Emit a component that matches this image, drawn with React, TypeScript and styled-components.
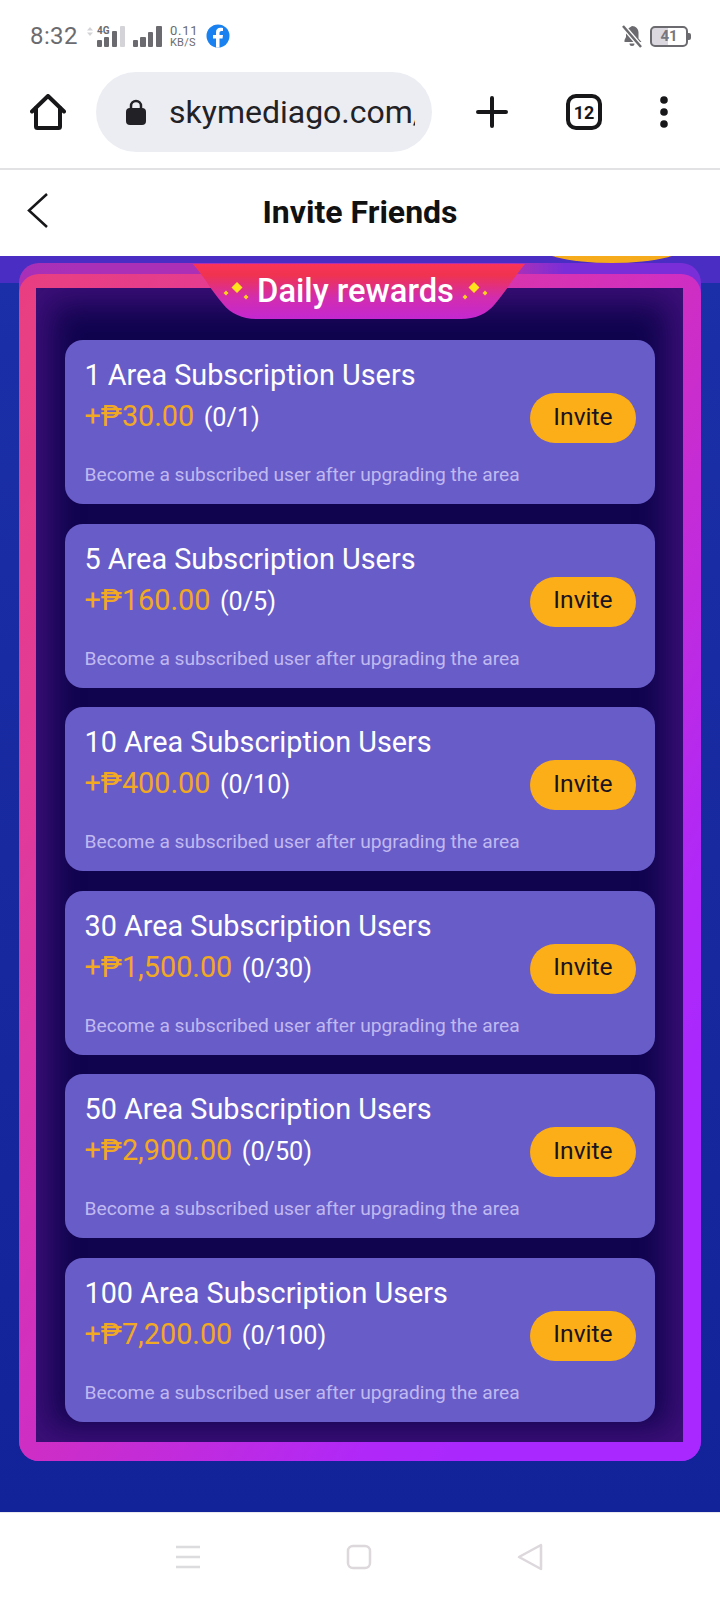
import React from 'react';
import styled, { createGlobalStyle } from 'styled-components';

const GlobalStyle = createGlobalStyle`
  html, body {
    margin: 0;
    padding: 0;
    background: #fff;
    font-family: Roboto, "Liberation Sans", sans-serif;
  }
  * { box-sizing: border-box; }
`;

const Page = styled.div`
  display: flex;
  flex-direction: column;
  width: 720px;
  height: 1600px;
  overflow: hidden;
`;

const StatusBar = styled.div`
  display: flex;
  align-items: center;
  justify-content: space-between;
  height: 72px;
  padding: 0 30px;
  color: #6b6b6f;
`;

const StatusGroup = styled.div`
  display: flex;
  align-items: center;
  gap: 8px;
`;

const Clock = styled.span`
  font-size: 24px;
  letter-spacing: 0.4px;
  margin-right: 1px;
`;

const Speed = styled.span`
  display: flex;
  flex-direction: column;
  font-size: 11px;
  line-height: 11px;
  letter-spacing: 0.3px;
`;

const SpeedValue = styled.span`
  font-size: 13px;
  line-height: 13px;
  letter-spacing: 0.8px;
`;

const Battery = styled.span`
  display: flex;
  align-items: center;
  justify-content: center;
  position: relative;
  width: 38px;
  height: 21px;
  margin-right: 2px;
  border: 2px solid #6b6b6f;
  border-radius: 5px;
  background: linear-gradient(to right, #dcd8e0 48%, transparent 48%);
  color: #77777d;
  font-size: 15px;
  font-weight: 700;
  &::after {
    content: '';
    position: absolute;
    right: -5px;
    top: 5px;
    width: 3px;
    height: 7px;
    background: #6b6b6f;
    border-radius: 0 2px 2px 0;
  }
`;

const Toolbar = styled.div`
  display: flex;
  align-items: center;
  height: 98px;
  padding: 0 0 16px 30px;
  border-bottom: 2px solid #e2e2e4;
`;

const UrlPill = styled.div`
  display: flex;
  align-items: center;
  width: 336px;
  height: 80px;
  margin-left: 30px;
  padding: 0 0 0 30px;
  border-radius: 40px;
  background: #ecedf2;
  color: #222226;
  font-size: 32px;
  white-space: nowrap;
`;

const UrlText = styled.span`
  display: block;
  width: 246px;
  margin-left: 23px;
  overflow: hidden;
`;

const ToolIcons = styled.div`
  display: flex;
  align-items: center;
  margin-left: 36px;
`;

const ToolSlot = styled.div<{ $w: number }>`
  display: flex;
  justify-content: center;
  width: ${p => p.$w}px;
`;

const TabCount = styled.div`
  display: flex;
  align-items: center;
  justify-content: center;
  width: 36px;
  height: 36px;
  border: 4px solid #17171a;
  border-radius: 10px;
  color: #17171a;
  font-size: 18px;
  font-weight: 700;
`;

const TitleBar = styled.div`
  display: flex;
  align-items: center;
  justify-content: center;
  position: relative;
  height: 86px;
  background: #fff;
`;

const BackIcon = styled.svg`
  position: absolute;
  left: 27px;
  top: 22px;
`;

const Title = styled.h1`
  margin: 0 0 2px;
  color: #111;
  font-size: 32px;
  font-weight: 700;
`;

const Stage = styled.main`
  position: relative;
  flex: 1;
  padding: 7px 19px 0;
  overflow: hidden;
  background: linear-gradient(to bottom, #4a2dc2 0, #4a2dc2 27px, #1a2fa8 27px, #18299f 600px, #12239a 100%);
`;

const CoinEdge = styled.div`
  position: absolute;
  left: 533px;
  top: -33px;
  width: 158px;
  height: 40px;
  border-radius: 50%;
  background: #f5ab1c;
`;

const FrameShell = styled.div`
  padding-top: 11px;
  border-radius: 20px;
  background: linear-gradient(to right, #a830b8 0, #b030b4 72%, #7a2ed8 80%, #7a2ed8 100%);
`;

const Frame = styled.div`
  padding: 14px 18px 19px 17px;
  border-radius: 20px;
  background: linear-gradient(120deg, #e93f80 0%, #e23a98 22%, #cf2ec4 50%, #b028f8 75%, #a828ff 85%);
`;

const Ribbon = styled.div`
  position: absolute;
  left: 193px;
  top: 8px;
  display: flex;
  align-items: center;
  justify-content: center;
  gap: 6px;
  width: 332px;
  height: 55px;
  padding: 0 7px 2px 0;
  background: linear-gradient(to bottom, #fa3358 0, #f0334f 20%, #d22cb0 62%, #c328d0 100%);
  clip-path: path('M0 0 H332 C320 14 314 26 302 40 C294 50 282 55 268 55 H64 C50 55 38 50 30 40 C18 26 12 14 0 0 Z');
  color: #fff;
  font-size: 32.7px;
  font-weight: 500;
`;

const SparkleIcon = styled.svg<{ $flip?: boolean }>`
  transform: ${p => (p.$flip ? 'scaleX(-1)' : 'none')};
`;

const CardPanel = styled.div`
  display: flex;
  flex-direction: column;
  gap: 19.6px;
  padding: 52px 28px 20px 29px;
  background: #10044e;
  box-shadow: inset 0 0 30px 16px #3c0f78;
`;

const Card = styled.section`
  display: flex;
  flex-direction: column;
  position: relative;
  height: 164px;
  padding: 17px 19.5px 0;
  border-radius: 18px;
  background: #685cc8;
`;

const CardTitle = styled.div`
  color: #fff;
  font-size: 28.8px;
  line-height: 36px;
`;

const RewardRow = styled.div`
  display: flex;
  align-items: baseline;
  gap: 9.5px;
  margin-top: 5px;
  line-height: 36px;
`;

const Amount = styled.span`
  color: #f2a922;
  font-size: 28.8px;
`;

const Progress = styled.span`
  color: #fff;
  font-size: 25.2px;
`;

const Hint = styled.div`
  margin-top: 27px;
  color: #c0b9f0;
  font-size: 19.2px;
  line-height: 24px;
`;

const InviteButton = styled.button`
  position: absolute;
  right: 19px;
  top: 53px;
  width: 106px;
  height: 50px;
  padding: 0 0 4px;
  border: 0;
  border-radius: 25px;
  background: #fbae17;
  color: #1a1320;
  font-family: inherit;
  font-size: 24.6px;
`;

const NavBar = styled.footer`
  display: flex;
  align-items: center;
  justify-content: space-between;
  height: 88px;
  padding: 0 177px 0 176px;
  border-top: 1px solid #e8e8ee;
  background: #fff;
`;

const cards = [
  { count: 1, amount: '30.00' },
  { count: 5, amount: '160.00' },
  { count: 10, amount: '400.00' },
  { count: 30, amount: '1,500.00' },
  { count: 50, amount: '2,900.00' },
  { count: 100, amount: '7,200.00' },
];

const Sparkle = ({ flip }: { flip?: boolean }) => (
  <SparkleIcon $flip={flip} width="28" height="24" viewBox="0 0 28 24">
    <path d="M14 3l5.500 5.500L14 14 8.500 8.500z" fill="#ffe21c" />
    <path d="M3 11.500l2.500 2.500L3 16.500.5 14zM23 15.500l2.500 2.500-2.500 2.500-2.500-2.500z" fill="#ffd21c" />
  </SparkleIcon>
);

const App = () => (
  <Page>
    <GlobalStyle />
    <StatusBar>
      <StatusGroup>
        <Clock>8:32</Clock>
        <svg width="38" height="24" viewBox="0 0 38 24">
          <path d="M3 3l3 3.500H0zM3 12L0 8.500h6z" fill="#d4d4d8" />
          <text x="10" y="10" fontSize="10" fontWeight="700" fill="#6b6b6f">4G</text>
          <rect x="10" y="16" width="5" height="7" rx="1" fill="#6b6b6f" />
          <rect x="17" y="13" width="5" height="10" rx="1" fill="#6b6b6f" />
          <rect x="25" y="7" width="5" height="16" rx="1" fill="#6b6b6f" />
          <rect x="33" y="2" width="5" height="21" rx="1" fill="#d4d4d8" />
        </svg>
        <svg width="29" height="21" viewBox="0 0 29 21">
          <rect x="0" y="14" width="5" height="7" rx="1" fill="#6b6b6f" />
          <rect x="7" y="11" width="6" height="10" rx="1" fill="#6b6b6f" />
          <rect x="15" y="6" width="5" height="15" rx="1" fill="#6b6b6f" />
          <rect x="23" y="0" width="6" height="21" rx="1" fill="#6b6b6f" />
        </svg>
        <Speed>
          <SpeedValue>0.11</SpeedValue>
          <span>KB/S</span>
        </Speed>
        <svg width="24" height="24" viewBox="0 0 24 24">
          <circle cx="12" cy="12" r="11.500" fill="#1a82f0" />
          <path d="M13.500 23.500v-9h3l.5-3.500h-3.500V9c0-1 .5-2 2-2H17V4c-.8-.1-1.700-.2-2.600-.2-2.700 0-4.400 1.600-4.400 4.600V11H7v3.500h3v9z" fill="#fff" />
        </svg>
      </StatusGroup>
      <StatusGroup>
        <svg width="20" height="24" viewBox="0 0 20 24">
          <path d="M10 2c4 0 6.500 3 6.500 6.500v6l3 3.500H2.500v-2L4 13V6zM7.500 19.500h5a2.500 2.500 0 0 1-5 0z" fill="#6b6b6f" />
          <path d="M1 2l18 21" stroke="#fff" strokeWidth="5" />
          <path d="M1 2l18 21" stroke="#6b6b6f" strokeWidth="2.500" />
        </svg>
        <Battery>41</Battery>
      </StatusGroup>
    </StatusBar>
    <Toolbar>
      <svg width="36" height="36" viewBox="0 0 36 36" fill="none" stroke="#17171a" strokeWidth="4" strokeLinejoin="round" strokeLinecap="round">
        <path d="M2 17.500L18 2l16 15.500" />
        <path d="M6 14v18.500a1.500 1.500 0 0 0 1.500 1.500h21a1.500 1.500 0 0 0 1.500-1.500V14" />
      </svg>
      <UrlPill>
        <svg width="20" height="26" viewBox="0 0 20 26">
          <path d="M5 11V7a5 5 0 0 1 10 0v4" fill="none" stroke="#222226" strokeWidth="2.500" />
          <rect x="0" y="9" width="20" height="17" rx="4" fill="#222226" />
        </svg>
        <UrlText>skymediago.com/</UrlText>
      </UrlPill>
      <ToolIcons>
        <ToolSlot $w={48}>
          <svg width="32" height="32" viewBox="0 0 32 32" stroke="#17171a" strokeWidth="4" strokeLinecap="round">
            <path d="M16 2v28M2 16h28" />
          </svg>
        </ToolSlot>
        <ToolSlot $w={136}>
          <TabCount>12</TabCount>
        </ToolSlot>
        <ToolSlot $w={24}>
          <svg width="8" height="32" viewBox="0 0 8 32" fill="#17171a">
            <circle cx="4" cy="4" r="3.800" />
            <circle cx="4" cy="16" r="3.800" />
            <circle cx="4" cy="28" r="3.800" />
          </svg>
        </ToolSlot>
      </ToolIcons>
    </Toolbar>
    <TitleBar>
      <BackIcon width="22" height="36" viewBox="0 0 22 36" fill="none" stroke="#17171a" strokeWidth="2.500">
        <path d="M20 2L2 18.500 20 35" />
      </BackIcon>
      <Title>Invite Friends</Title>
    </TitleBar>
    <Stage>
      <CoinEdge />
      <FrameShell>
        <Frame>
          <CardPanel>
            {cards.map(card => (
              <Card key={card.count}>
                <CardTitle>{card.count} Area Subscription Users</CardTitle>
                <RewardRow>
                  <Amount>+₱{card.amount}</Amount>
                  <Progress>(0/{card.count})</Progress>
                </RewardRow>
                <Hint>Become a subscribed user after upgrading the area</Hint>
                <InviteButton>Invite</InviteButton>
              </Card>
            ))}
          </CardPanel>
        </Frame>
      </FrameShell>
      <Ribbon>
        <Sparkle />
        Daily rewards
        <Sparkle flip />
      </Ribbon>
    </Stage>
    <NavBar>
      <svg width="24" height="24" viewBox="0 0 24 24" stroke="#dcdcdf" strokeWidth="2.500">
        <path d="M0 2h24M0 12h24M0 22h24" />
      </svg>
      <svg width="26" height="26" viewBox="0 0 26 26" fill="none" stroke="#dcd8dc" strokeWidth="2.500">
        <rect x="2" y="2" width="22" height="22" rx="5" />
      </svg>
      <svg width="26" height="28" viewBox="0 0 26 28" fill="none" stroke="#dcd8dc" strokeWidth="2.500" strokeLinejoin="round">
        <path d="M24 2v24L2 14z" />
      </svg>
    </NavBar>
  </Page>
);

export default App;
